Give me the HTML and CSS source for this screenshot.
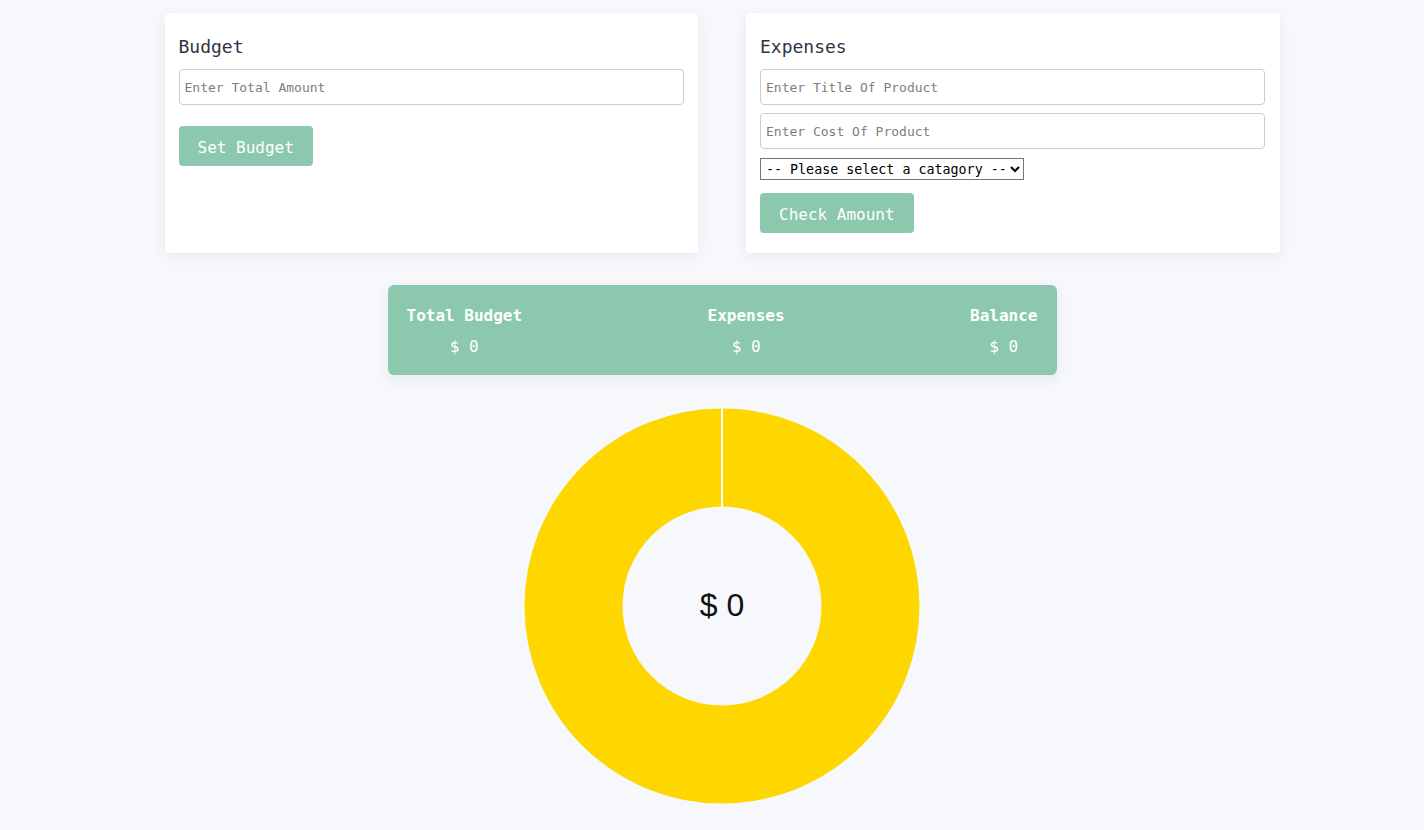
FILE: index.html
```html
<!DOCTYPE html>
<html lang="en">
<head>
<meta charset="utf-8">
<title>Budget App</title>
<link rel="stylesheet" href="styles.css">
</head>
<body>
<div class="app">
  <div class="forms">
    <div class="card">
      <h3 class="card-title">Budget</h3>
      <input class="field" type="text" placeholder="Enter Total Amount">
      <button class="btn btn-budget">Set Budget</button>
    </div>
    <div class="card">
      <h3 class="card-title">Expenses</h3>
      <input class="field" type="text" placeholder="Enter Title Of Product">
      <input class="field field-second" type="text" placeholder="Enter Cost Of Product">
      <select class="category">
        <option>-- Please select a catagory --</option>
      </select>
      <button class="btn btn-check">Check Amount</button>
    </div>
  </div>

  <div class="summary">
    <div class="stat">
      <div class="stat-label">Total Budget</div>
      <div class="stat-value">$ 0</div>
    </div>
    <div class="stat">
      <div class="stat-label">Expenses</div>
      <div class="stat-value">$ 0</div>
    </div>
    <div class="stat">
      <div class="stat-label">Balance</div>
      <div class="stat-value">$ 0</div>
    </div>
  </div>

  <div class="chart">
    <svg class="donut" width="400" height="400" viewBox="0 0 400 400">
      <circle cx="200" cy="200" r="148.5" fill="none" stroke="#fed700" stroke-width="98"></circle>
      <line x1="200" y1="1" x2="200" y2="101" stroke="#ffffff" stroke-width="2"></line>
    </svg>
    <div class="chart-center">$ 0</div>
  </div>
</div>
</body>
</html>
```

FILE: styles.css
```css
* { box-sizing: border-box; }

html, body {
  margin: 0;
  padding: 0;
  background: #f7f8fc;
}

body {
  font-family: "DejaVu Sans Mono", "Liberation Mono", monospace;
  color: #2f3542;
}

.app {
  padding-left: 20px;
  display: flex;
  flex-direction: column;
  align-items: center;
}

.forms {
  display: flex;
  gap: 48px;
  margin-top: 13px;
}

.card {
  width: 533.5px;
  height: 240px;
  background: #ffffff;
  border-radius: 4px;
  box-shadow: 0 4px 14px rgba(40, 50, 90, 0.07);
  padding: 14px 14px 20px 14px;
  display: flex;
  flex-direction: column;
  align-items: flex-start;
}

.card-title {
  margin: 8px 0 10px;
  font-size: 18px;
  line-height: 24px;
  font-weight: 500;
  color: #2f3542;
}

.field {
  width: 505px;
  height: 36px;
  border: 1px solid #cccccc;
  border-radius: 4px;
  padding: 0 5px;
  font-family: inherit;
  font-size: 13px;
  color: #333;
  background: #fff;
}

.field::placeholder {
  color: #7d7d7d;
}

.field-second {
  margin-top: 8px;
}

.category {
  margin-top: 9px;
  height: 22px;
  width: 264px;
  font-family: inherit;
  font-size: 13.33px;
  color: #000;
  border: 1px solid #767676;
  border-radius: 0;
  background: #fff;
  padding: 0 1px;
}

.btn {
  height: 40px;
  border: none;
  border-radius: 4px;
  background: #8bc8ae;
  color: #ffffff;
  font-family: inherit;
  font-size: 16px;
  padding: 2px 19px 0;
  white-space: nowrap;
}

.btn-budget {
  margin-top: 21px;
}

.btn-check {
  margin-top: 13px;
}

.summary {
  margin-top: 32px;
  width: 669px;
  background: #8bc8ae;
  border-radius: 6px;
  box-shadow: 0 4px 14px rgba(40, 50, 90, 0.08);
  padding: 19px 19px 16px;
  display: flex;
  justify-content: space-between;
  color: #ffffff;
}

.stat {
  display: flex;
  flex-direction: column;
  align-items: center;
  gap: 7px;
}

.stat-label {
  font-size: 16px;
  line-height: 24px;
  font-weight: bold;
}

.stat-value {
  font-size: 16px;
  line-height: 24px;
}

.chart {
  position: relative;
  margin-top: 31px;
  width: 400px;
  height: 400px;
}

.donut {
  display: block;
}

.chart-center {
  position: absolute;
  left: 0;
  right: 0;
  top: 181px;
  text-align: center;
  font-family: "Liberation Sans", Arial, sans-serif;
  font-size: 32px;
  line-height: 36px;
  color: #111;
}
```
